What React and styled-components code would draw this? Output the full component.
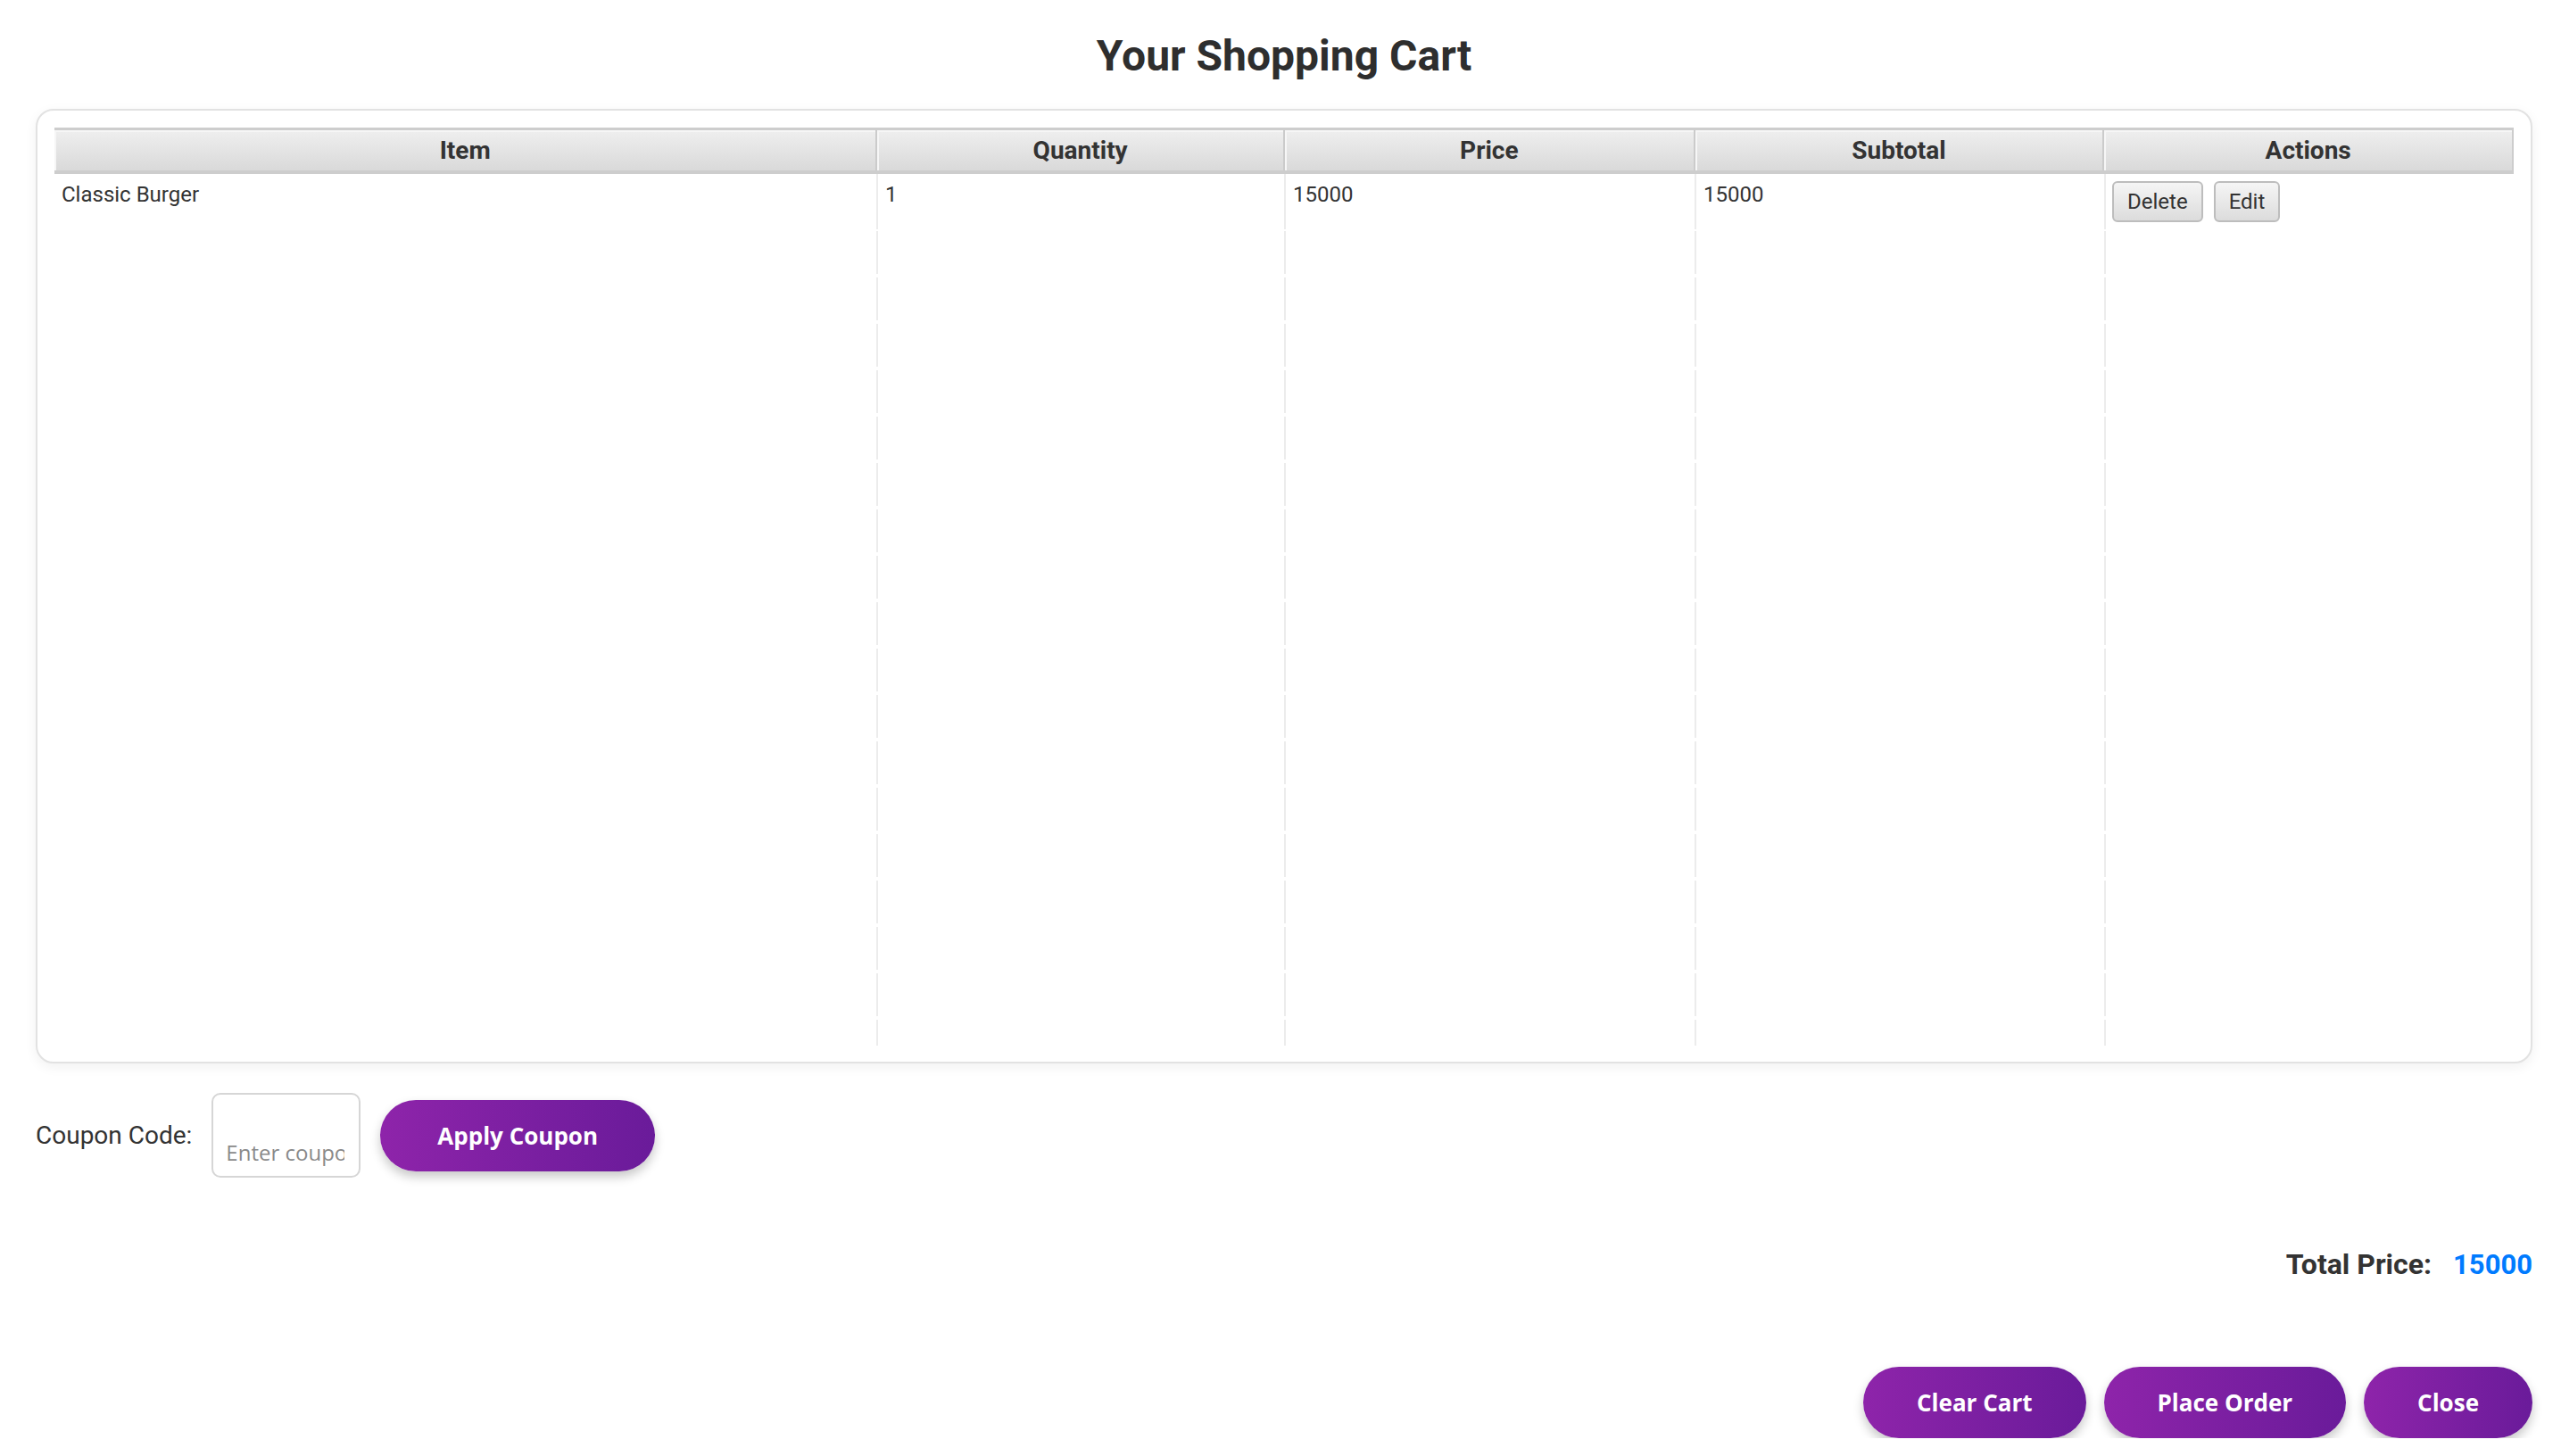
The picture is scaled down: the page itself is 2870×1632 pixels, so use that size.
import styled, { createGlobalStyle } from "styled-components";

const GlobalStyle = createGlobalStyle`
  body {
    margin: 0;
    background: #fff;
    font-family: Roboto, "Liberation Sans", sans-serif;
    color: #333;
  }
`;

const Page = styled.div`
  padding: 34px 32px 0 40px;
`;

const Title = styled.h1`
  margin: 0 0 31px;
  text-align: center;
  font-size: 48px;
  font-weight: 700;
  color: #2e2e2e;
  line-height: normal;
`;

const Card = styled.div`
  box-sizing: border-box;
  height: 1070px;
  padding: 19px;
  border: 2px solid #e2e2e2;
  border-radius: 20px;
  box-shadow: 0 4px 14px rgba(0, 0, 0, 0.06);
  background: #fff;
`;

const cols = "921fr 457fr 460fr 459fr 459fr";

const HeadRow = styled.div`
  display: grid;
  grid-template-columns: ${cols};
  box-sizing: border-box;
  height: 52px;
  border-top: 3px solid #cdcdcd;
  border-bottom: 4px solid #cdcdcd;
  border-right: 2px solid #cdcdcd;
  background: linear-gradient(#efefef, #d9d9d9);
`;

const HeadCell = styled.div`
  display: flex;
  align-items: center;
  justify-content: center;
  font-size: 28px;
  font-weight: 700;
  color: #333;
  border-left: ${(p) => (p.$first ? "none" : "2px solid #cbcbcb")};
  box-shadow: inset 2px 2px 0 #f6f6f6;
`;

const Body = styled.div`
  height: 977px;
  overflow: hidden;
`;

const Row = styled.div`
  display: grid;
  grid-template-columns: ${cols};
  height: ${(p) => (p.$tall ? "60px" : "48px")};
  margin-bottom: 4px;
`;

const Cell = styled.div`
  padding: 9px 8px;
  font-size: 24px;
  color: #333;
  border-left: ${(p) => (p.$first ? "none" : "2px solid #ececec")};
`;

const ActionCell = styled(Cell)`
  display: flex;
  align-items: flex-start;
  gap: 12px;
  padding: 8px 7px;
`;

const SmallButton = styled.button`
  height: 46px;
  padding: 0 15px;
  border: 2px solid #bdbdbd;
  border-radius: 6px;
  background: linear-gradient(#f5f5f5, #dcdcdc);
  font-family: Roboto, "Liberation Sans", sans-serif;
  font-size: 24px;
  color: #333;
`;

const CouponRow = styled.div`
  display: flex;
  align-items: center;
  gap: 22px;
  margin-top: 33px;
`;

const Label = styled.span`
  font-size: 28px;
  color: #333;
`;

const CouponInput = styled.input`
  box-sizing: border-box;
  width: 167px;
  height: 95px;
  padding: 48px 16px 10px 14px;
  border: 2px solid #d6d6d6;
  border-radius: 10px;
  font-family: "Open Sans", sans-serif;
  font-size: 24px;
  outline: none;

  &::placeholder {
    color: #8a8a8a;
  }
`;

const PillButton = styled.button`
  height: 80px;
  padding: 0 ${(p) => (p.$wide ? "64px" : "60px")};
  border: none;
  border-radius: 40px;
  background: linear-gradient(90deg, #8e24aa, #6a1b9a);
  box-shadow: 0 6px 12px rgba(0, 0, 0, 0.22);
  color: #fff;
  font-family: "Open Sans", sans-serif;
  font-size: 26px;
  font-weight: 700;
  cursor: pointer;
`;

const TotalRow = styled.div`
  display: flex;
  justify-content: flex-end;
  align-items: baseline;
  gap: 24px;
  margin-top: 78px;
  font-size: 32px;
  font-weight: 700;
`;

const TotalValue = styled.span`
  color: #007bff;
  font-size: 31px;
`;

const ButtonRow = styled.div`
  display: flex;
  justify-content: flex-end;
  gap: 20px;
  margin-top: 96px;
`;

const headers = ["Item", "Quantity", "Price", "Subtotal", "Actions"];

export default function App() {
  const empty = Array.from({ length: 18 });

  return (
    <Page>
      <GlobalStyle />
      <Title>Your Shopping Cart</Title>

      <Card>
        <HeadRow>
          {headers.map((h, i) => (
            <HeadCell key={h} $first={i === 0}>
              {h}
            </HeadCell>
          ))}
        </HeadRow>
        <Body>
          <Row $tall>
            <Cell $first>Classic Burger</Cell>
            <Cell>1</Cell>
            <Cell>15000</Cell>
            <Cell>15000</Cell>
            <ActionCell>
              <SmallButton>Delete</SmallButton>
              <SmallButton>Edit</SmallButton>
            </ActionCell>
          </Row>
          {empty.map((_, i) => (
            <Row key={i}>
              <Cell $first />
              <Cell />
              <Cell />
              <Cell />
              <Cell />
            </Row>
          ))}
        </Body>
      </Card>

      <CouponRow>
        <Label>Coupon Code:</Label>
        <CouponInput placeholder="Enter coupon code" />
        <PillButton $wide>Apply Coupon</PillButton>
      </CouponRow>

      <TotalRow>
        <span>Total Price:</span>
        <TotalValue>15000</TotalValue>
      </TotalRow>

      <ButtonRow>
        <PillButton>Clear Cart</PillButton>
        <PillButton>Place Order</PillButton>
        <PillButton>Close</PillButton>
      </ButtonRow>
    </Page>
  );
}
